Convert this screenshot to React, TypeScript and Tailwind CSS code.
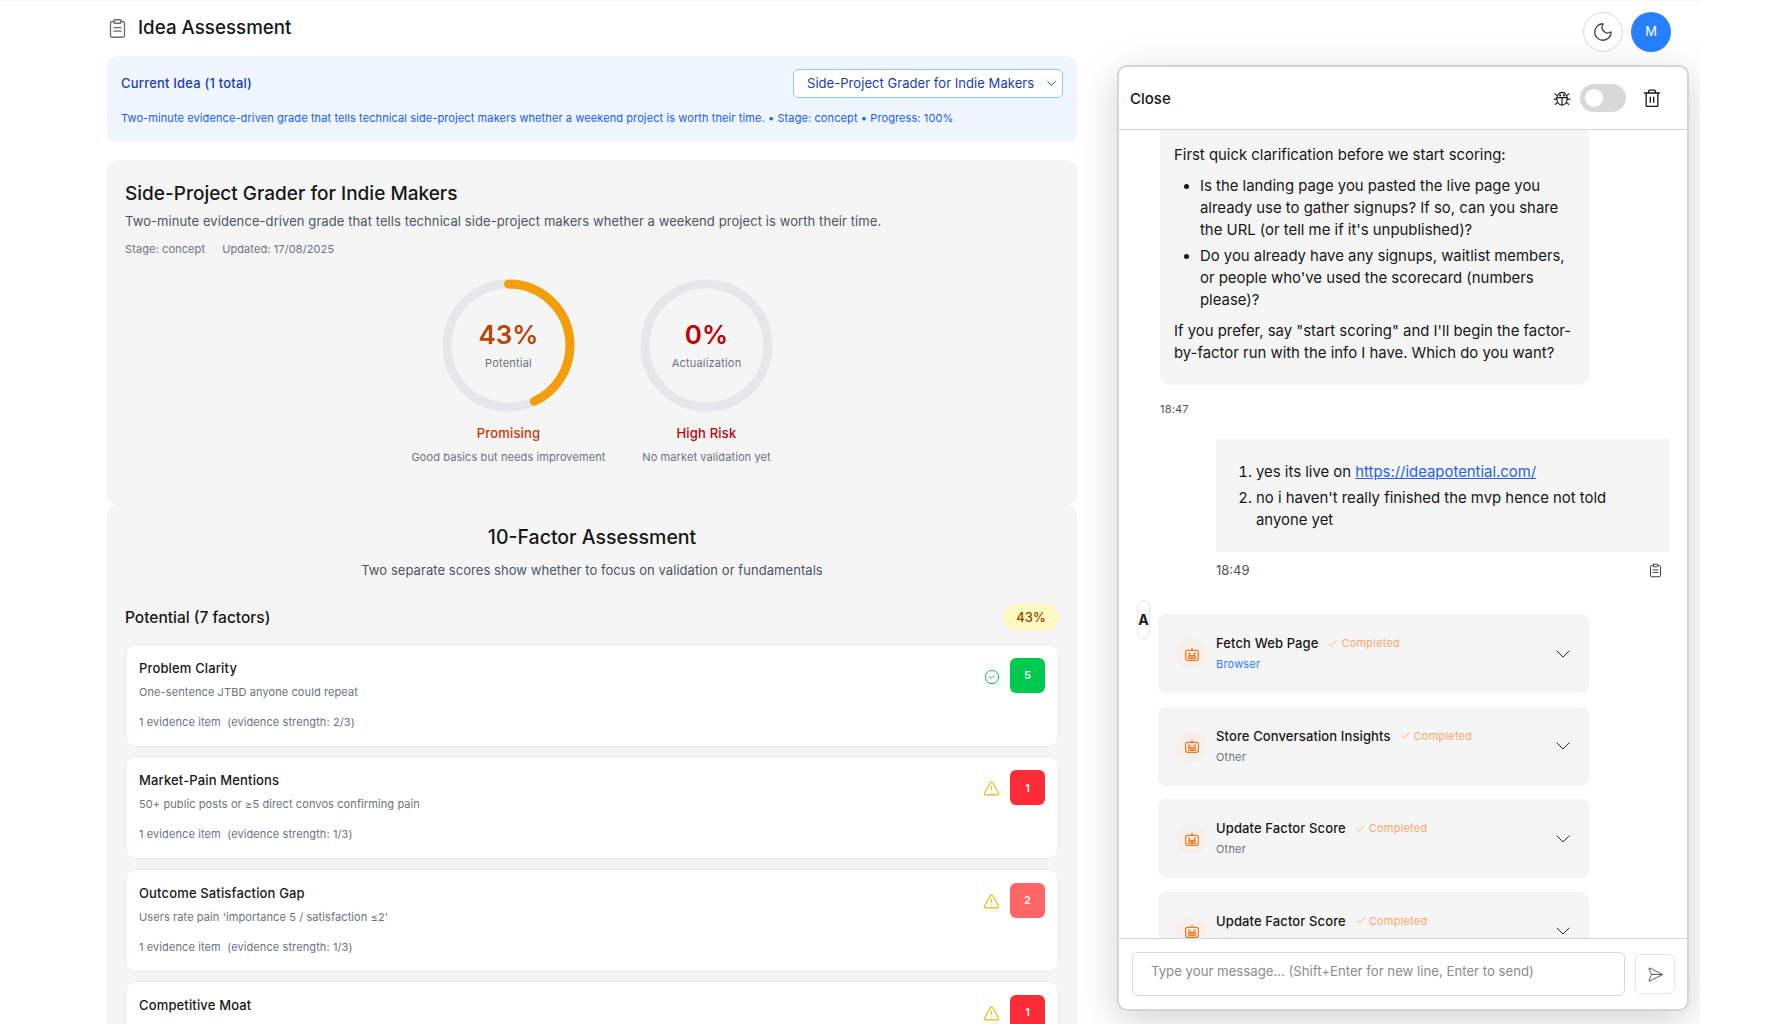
import React from "react";
import { Moon, CircleCheck, TriangleAlert, ChevronDown, Check, Send } from "lucide-react";

function ClipIcon({ className }: { className?: string }) {
  return (
    <svg viewBox="0 0 24 24" fill="none" stroke="currentColor" strokeWidth="1.5" strokeLinecap="round" strokeLinejoin="round" className={className}>
      <path d="M8 4H6a2 2 0 0 0-2 2v14a2 2 0 0 0 2 2h12a2 2 0 0 0 2-2V6a2 2 0 0 0-2-2h-2" />
      <rect x="8" y="2" width="8" height="4" rx="1" />
      <path d="M8 11h8M8 15h8" />
    </svg>
  );
}

function BugIcon({ className }: { className?: string }) {
  return (
    <svg viewBox="0 0 24 24" fill="none" stroke="currentColor" strokeWidth="1.5" strokeLinecap="round" strokeLinejoin="round" className={className}>
      <ellipse cx="12" cy="13" rx="7" ry="8.5" />
      <path d="M5.2 11.5h13.6M12 11.5V21M5.3 8.5 2.5 6.5M18.7 8.5l2.8-2M5 13.5H1.5M19 13.5h3.5M6 18l-3 2.5M18 18l3 2.5" />
      <circle cx="9.5" cy="8.5" r="0.6" fill="currentColor" />
      <circle cx="14.5" cy="8.5" r="0.6" fill="currentColor" />
    </svg>
  );
}

function TrashIcon({ className }: { className?: string }) {
  return (
    <svg viewBox="0 0 24 24" fill="none" stroke="currentColor" strokeWidth="1.6" strokeLinecap="round" strokeLinejoin="round" className={className}>
      <path d="M3 6h18M5 6v15a1 1 0 0 0 1 1h12a1 1 0 0 0 1-1V6M8 6V3.5a1 1 0 0 1 1-1h6a1 1 0 0 1 1 1V6M10 11v6M14 11v6" />
    </svg>
  );
}

function RobotIcon({ className }: { className?: string }) {
  return (
    <svg viewBox="0 0 24 24" fill="none" stroke="currentColor" strokeWidth="1.8" strokeLinecap="round" strokeLinejoin="round" className={className}>
      <rect x="2.5" y="6.5" width="19" height="15" rx="3" />
      <path d="M12 6.5V3" />
      <circle cx="8" cy="11.5" r="0.8" fill="currentColor" />
      <circle cx="16" cy="11.5" r="0.8" fill="currentColor" />
      <rect x="6.5" y="14.5" width="11" height="4" rx="2" />
      <path d="M10.5 14.5v4M13.5 14.5v4" />
    </svg>
  );
}

function Gauge({ pct, value, label, color, verdict, note, verdictClass, valueClass }: { pct: number; value: string; label: string; color: string; verdict: string; note: string; verdictClass: string; valueClass: string }) {
  const r = 61.5;
  const c = 2 * Math.PI * r;
  return (
    <div className="flex w-[198px] flex-col items-center">
      <div className="relative h-[133px] w-[133px]">
        <svg width="133" height="133" viewBox="0 0 133 133" className="-rotate-90">
          <circle cx="66.5" cy="66.5" r={r} fill="none" stroke="#e5e7eb" strokeWidth="9" />
          {pct > 0 && (
            <circle cx="66.5" cy="66.5" r={r} fill="none" stroke={color} strokeWidth="9" strokeLinecap="round" strokeDasharray={`${(c * pct) / 100} ${c}`} />
          )}
        </svg>
        <div className="absolute inset-0 flex flex-col items-center">
          <div className={`mt-[41px] text-[26px] leading-[30px] font-semibold ${valueClass}`}>{value}</div>
          <div className="mt-[6px] text-[11px] leading-[14px] tracking-[0.2px] text-[#6a7282]">{label}</div>
        </div>
      </div>
      <div className={`mt-[12px] text-[13px] leading-[18px] font-medium tracking-[0.2px] ${verdictClass}`}>{verdict}</div>
      <div className="mt-[8px] text-[11px] leading-[14px] tracking-[0.1px] whitespace-nowrap text-[#6a7282]">{note}</div>
    </div>
  );
}

const factors = [
  { name: "Problem Clarity", desc: "One-sentence JTBD anyone could repeat", ev: "1 evidence item  (evidence strength: 2/3)", score: 5, ok: true, bg: "bg-[#00c950]" },
  { name: "Market-Pain Mentions", desc: "50+ public posts or ≥5 direct convos confirming pain", ev: "1 evidence item  (evidence strength: 1/3)", score: 1, ok: false, bg: "bg-[#fb2c36]" },
  { name: "Outcome Satisfaction Gap", desc: "Users rate pain 'importance 5 / satisfaction ≤2'", ev: "1 evidence item  (evidence strength: 1/3)", score: 2, ok: false, bg: "bg-[#ff6467]" },
  { name: "Competitive Moat", desc: "", ev: "", score: 1, ok: false, bg: "bg-[#fb2c36]" },
];

function FactorCard({ f }: { f: (typeof factors)[number] }) {
  return (
    <div className="flex h-[103px] shrink-0 justify-between rounded-[10px] border border-[#e5e7eb] bg-white pt-[13px] pr-[13px] pl-[13px]">
      <div>
        <div className="text-[13px] leading-[20px] font-medium tracking-[0.15px] text-[#171717]">{f.name}</div>
        {f.desc && <div className="mt-[5px] text-[11px] leading-[18px] tracking-[0.1px] text-[#6a7282]">{f.desc}</div>}
        {f.ev && <div className="mt-[12px] text-[11px] leading-[18px] tracking-[0.1px] whitespace-pre text-[#6a7282]">{f.ev}</div>}
      </div>
      <div className="flex items-start gap-[10px]">
        {f.ok ? (
          <CircleCheck className="mt-[11px] h-[16px] w-[16px] text-[#00c950]" strokeWidth={1.5} />
        ) : (
          <TriangleAlert className="mt-[10px] h-[17px] w-[17px] text-[#f0b100]" strokeWidth={1.5} />
        )}
        <div className={`flex h-[35px] w-[35px] items-center justify-center rounded-[6px] text-[11px] font-semibold text-white ${f.bg}`}>{f.score}</div>
      </div>
    </div>
  );
}

function ToolCard({ title, sub, blue }: { title: string; sub: string; blue?: boolean }) {
  return (
    <div className="flex h-[79px] shrink-0 items-center rounded-[8px] bg-[#f5f5f5] pr-[14px] pl-[18px]">
      <div className="flex h-[31px] w-[31px] shrink-0 items-center justify-center rounded-full bg-[#f5f0eb]">
        <RobotIcon className="h-[16px] w-[16px] text-[#f97316]" />
      </div>
      <div className="ml-[9px] flex-1 pb-[1px]">
        <div className="flex items-center">
          <span className="text-[13px] leading-[20px] font-medium tracking-[0.12px] text-[#171717]">{title}</span>
          <Check className="ml-[9px] h-[11px] w-[11px] text-[#fba76d]" strokeWidth={1.75} />
          <span className="ml-[3px] text-[11px] leading-[20px] tracking-[0.2px] text-[#fba76d]">Completed</span>
        </div>
        <div className={`mt-[2px] text-[11px] leading-[18px] tracking-[0.2px] ${blue ? "text-[#2b7fff]" : "text-[#6a7282]"}`}>{sub}</div>
      </div>
      <ChevronDown className="h-[24px] w-[24px] text-[#262626]" strokeWidth={1} />
    </div>
  );
}

export default function App() {
  return (
    <div className="h-screen w-[1700px] overflow-hidden border-t border-[#f7f7f7] bg-white pl-[107px] font-['Inter',sans-serif] text-[#171717]">
      <div className="flex h-[64px] items-start justify-between pt-[11px] pr-[29px]">
        <div className="flex h-[32px] items-center">
          <ClipIcon className="h-[21px] w-[21px] text-[#6b6b6b]" />
          <h1 className="ml-[10px] text-[18.75px] leading-[32px] font-medium text-[#171717]">Idea Assessment</h1>
        </div>
        <div className="flex gap-[8px]">
          <div className="flex h-[40px] w-[40px] items-center justify-center rounded-full border border-[#d9d9d9] bg-white">
            <Moon className="h-[22px] w-[22px] text-[#404040]" strokeWidth={1.4} />
          </div>
          <div className="flex h-[40px] w-[40px] items-center justify-center rounded-full bg-[#2680ff] text-[13px] text-white">M</div>
        </div>
      </div>

      <div className="flex items-start gap-[40px]">
        <div className="-mt-[9px] flex w-[970px] shrink-0 flex-col">
          <div className="flex h-[86px] flex-col rounded-[10px] bg-[#eff6ff] pt-[13px] pr-[14px] pl-[14px]">
            <div className="flex items-center justify-between">
              <div className="text-[13px] font-medium tracking-[0.2px] text-[#193cb8]">Current Idea (1 total)</div>
              <div className="flex h-[29px] w-[270px] items-center justify-between rounded-[5px] border border-[#8ec5ff] bg-white pr-[3px] pl-[13px] text-[13px] tracking-[0.05px] text-[#193cb8]">
                <span>Side-Project Grader for Indie Makers</span>
                <ChevronDown className="h-[15px] w-[15px] text-[#1e3a8a]" strokeWidth={1.5} />
              </div>
            </div>
            <div className="mt-[11px] text-[11px] leading-[18px] tracking-[0.1px] text-[#155dfc]">
              Two-minute evidence-driven grade that tells technical side-project makers whether a weekend project is worth their time. • Stage: concept • Progress: 100%
            </div>
          </div>

          <div className="mt-[18px] h-[345px] rounded-[10px] bg-[#f5f5f5] pt-[21px] pr-[18px] pl-[18px]">
            <h2 className="text-[19px] leading-[26px] font-medium text-[#171717]">Side-Project Grader for Indie Makers</h2>
            <p className="mt-[4px] text-[13px] leading-[20px] tracking-[0.08px] text-[#4a5565]">Two-minute evidence-driven grade that tells technical side-project makers whether a weekend project is worth their time.</p>
            <div className="mt-[9px] flex gap-[17px] text-[11px] leading-[18px] tracking-[0.1px] text-[#6a7282]">
              <span>Stage: concept</span>
              <span>Updated: 17/08/2025</span>
            </div>
            <div className="mt-[21px] flex justify-center pl-[31px]">
              <Gauge pct={43} value="43%" label="Potential" color="#f59e0b" verdict="Promising" note="Good basics but needs improvement" verdictClass="text-[#ca3500]" valueClass="text-[#b54708]" />
              <Gauge pct={0} value="0%" label="Actualization" color="#ef4444" verdict="High Risk" note="No market validation yet" verdictClass="text-[#c10007]" valueClass="text-[#c10007]" />
            </div>
          </div>

          <div className="rounded-[10px] bg-[#f5f5f5] pt-[19px] pr-[18px] pl-[18px]">
            <h2 className="text-center text-[19.5px] leading-[26px] font-medium text-[#171717]">10-Factor Assessment</h2>
            <p className="mt-[10px] text-center text-[13px] leading-[20px] tracking-[0.06px] text-[#4a5565]">Two separate scores show whether to focus on validation or fundamentals</p>
            <div className="mt-[24px] flex items-center justify-between">
              <div className="pt-[1px] text-[15.5px] font-medium text-[#171717]">Potential (7 factors)</div>
              <div className="flex h-[27px] w-[56px] items-center justify-center rounded-full bg-[#fef9c2] text-[13px] font-medium text-[#894b00]">43%</div>
            </div>
            <div className="mt-[13px] flex flex-col gap-[9.4px]">
              {factors.map((f) => (
                <FactorCard key={f.name} f={f} />
              ))}
            </div>
          </div>
        </div>

        <div className="flex h-[946px] w-[572px] shrink-0 flex-col overflow-hidden rounded-[10px] border-2 border-[#d4d4d4] bg-white shadow-[0_10px_40px_rgba(0,0,0,0.18)]">
          <div className="flex h-[63px] shrink-0 items-center border-b border-[#d4d4d4] pr-[25px] pl-[11px]">
            <div className="flex-1 pt-[2px] text-[15px] font-medium text-[#171717]">Close</div>
            <BugIcon className="h-[18px] w-[18px] text-[#171717]" />
            <div className="ml-[9px] flex h-[28px] w-[46px] items-center rounded-full bg-[#d9d9d9] pl-[5px]">
              <div className="h-[18px] w-[18px] rounded-full bg-white" />
            </div>
            <TrashIcon className="ml-[16px] h-[20px] w-[20px] text-[#171717]" />
          </div>

          <div className="flex min-h-0 flex-1 flex-col overflow-hidden pr-[17px] pl-[19px]">
            <div className="ml-[22px] w-[429px] shrink-0 rounded-b-[10px] bg-[#f5f5f5] px-[14px] pt-[14px] pb-[21px] text-[14.9px] leading-[22px] text-[#171717]">
              <p>First quick clarification before we start scoring:</p>
              <ul className="mt-[9px] list-disc pl-[26px]">
                <li>Is the landing page you pasted the live page you already use to gather signups? If so, can you share the URL (or tell me if it's unpublished)?</li>
                <li className="mt-[4px]">Do you already have any signups, waitlist members, or people who've used the scorecard (numbers please)?</li>
              </ul>
              <p className="mt-[9px]">If you prefer, say "start scoring" and I'll begin the factor-by-factor run with the info I have. Which do you want?</p>
            </div>
            <div className="mt-[17px] ml-[22px] text-[11px] leading-[14px] tracking-[0.2px] text-[#525252]">18:47</div>

            <div className="mt-[23px] ml-[78px] w-[453px] shrink-0 bg-[#f5f5f5] pt-[22px] pr-[30px] pb-[21px] pl-[24px] text-[14.9px] leading-[22px] text-[#171717]">
              <ol className="list-decimal pl-[16px]">
                <li>yes its live on <a className="text-[#2563eb] underline">https://ideapotential.com/</a></li>
                <li className="mt-[4px]">no i haven't really finished the mvp hence not told anyone yet</li>
              </ol>
            </div>
            <div className="mt-[9px] ml-[78px] flex w-[453px] items-center justify-between pr-[6px] text-[13px] leading-[18px] text-[#525252]">
              <span>18:49</span>
              <ClipIcon className="h-[15px] w-[15px] text-[#333333]" />
            </div>

            <div className="mt-[21px] flex items-start">
              <div className="-ml-[1px] flex h-[39px] w-[13px] shrink-0 items-center justify-center rounded-full border border-[#e5e5e5] bg-white text-[14px] font-bold text-[#171717]">A</div>
              <div className="mt-[14px] ml-[8px] flex w-[431px] flex-col gap-[13.6px]">
                <ToolCard title="Fetch Web Page" sub="Browser" blue />
                <ToolCard title="Store Conversation Insights" sub="Other" />
                <ToolCard title="Update Factor Score" sub="Other" />
                <ToolCard title="Update Factor Score" sub="Other" />
              </div>
            </div>
          </div>

          <div className="flex h-[71px] shrink-0 items-center gap-[10px] border-t border-[#d4d4d4] pr-[12px] pl-[13px]">
            <div className="flex h-[44px] flex-1 rounded-[6px] border-[1.5px] border-[#d9d9d9] pt-[9px] pl-[18px] text-[13.2px] text-[#8c8c8c]">
              Type your message... (Shift+Enter for new line, Enter to send)
            </div>
            <div className="flex h-[40px] w-[40px] items-center justify-center rounded-[6px] border border-[#e5e5e5] bg-white pr-[5px]">
              <Send className="h-[17px] w-[17px] rotate-45 text-[#525252]" strokeWidth={1.25} />
            </div>
          </div>
        </div>
      </div>
    </div>
  );
}
